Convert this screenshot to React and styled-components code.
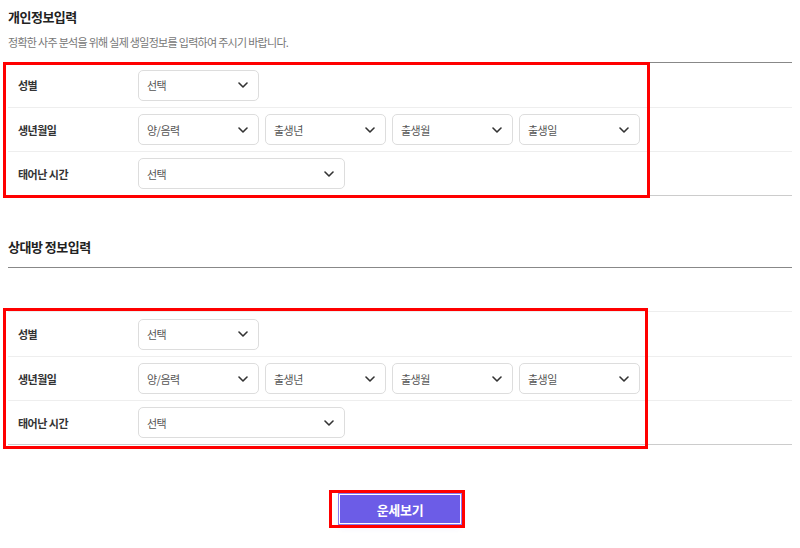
import React from "react";
import styled, { createGlobalStyle } from "styled-components";

const Global = createGlobalStyle`
  html, body { margin: 0; padding: 0; background: #fff; }
  body { font-family: "Noto Sans CJK KR", "Noto Sans", sans-serif; color: #333; }
  * { box-sizing: border-box; }
`;

const Page = styled.div`
  width: 800px;
  height: 548px;
  padding: 6px 8px 0;
  overflow: hidden;
`;

const Title = styled.h2`
  margin: 0;
  font-size: 13px;
  line-height: 22px;
  font-weight: 700;
  color: #222;
  letter-spacing: -0.5px;
`;

const SubTitle = styled.p`
  margin: 6px 0 12px;
  font-size: 11px;
  line-height: 16px;
  color: #777;
  letter-spacing: -0.7px;
`;

const HeadingBar = styled.div`
  margin-top: 40px;
  padding-bottom: 9px;
  border-bottom: 1px solid #888;
  margin-bottom: 43px;
`;

const TableWrap = styled.div`
  position: relative;
  border-top: 1px solid ${(p) => p.$top};
  border-bottom: 1px solid #ccc;
`;

const Row = styled.div`
  display: flex;
  align-items: center;
  height: 44px;
  & + & { border-top: 1px solid #eee; }
`;

const Label = styled.div`
  width: 130px;
  padding-left: 10px;
  font-size: 11px;
  font-weight: 700;
  color: #333;
  letter-spacing: -0.5px;
`;

const Controls = styled.div`
  display: flex;
  gap: 6px;
`;

const Select = styled.div`
  width: ${(p) => p.$w}px;
  height: 31px;
  border: 1px solid #ddd;
  border-radius: 5px;
  display: flex;
  align-items: center;
  justify-content: space-between;
  padding: 0 10px 0 8px;
  font-size: 11px;
  color: #555;
  letter-spacing: -0.5px;
  background: #fff;
`;

const Highlight = styled.div`
  position: absolute;
  left: ${(p) => p.$l}px;
  top: ${(p) => p.$t}px;
  width: ${(p) => p.$w}px;
  height: ${(p) => p.$h}px;
  border: 3px solid #ff0000;
  pointer-events: none;
`;

const ButtonArea = styled.div`
  display: flex;
  justify-content: center;
  margin-top: 49px;
`;

const ButtonWrap = styled.div`
  position: relative;
`;

const Button = styled.button`
  width: 122px;
  height: 30px;
  background: #6c5ce7;
  color: #fff;
  border: 1px solid #fff;
  outline: 1px solid #8a7cf0;
  font-family: inherit;
  font-size: 13px;
  font-weight: 700;
  letter-spacing: -0.3px;
  box-shadow: 0 3px 6px rgba(108, 92, 231, 0.12);
  cursor: pointer;
`;

const Chevron = () => (
  <svg width="10" height="6" viewBox="0 0 10 6">
    <path d="M1 1l4 4 4-4" fill="none" stroke="#333" strokeWidth="1.6" strokeLinecap="round" strokeLinejoin="round" />
  </svg>
);

const Sel = ({ w = 121, children }) => (
  <Select $w={w}>
    <span>{children}</span>
    <Chevron />
  </Select>
);

const Form = ({ top, hl }) => (
  <TableWrap $top={top}>
    <Row>
      <Label>성별</Label>
      <Controls>
        <Sel>선택</Sel>
      </Controls>
    </Row>
    <Row>
      <Label>생년월일</Label>
      <Controls>
        <Sel>양/음력</Sel>
        <Sel>출생년</Sel>
        <Sel>출생월</Sel>
        <Sel>출생일</Sel>
      </Controls>
    </Row>
    <Row>
      <Label>태어난 시간</Label>
      <Controls>
        <Sel w={207}>선택</Sel>
      </Controls>
    </Row>
    <Highlight $l={hl.l} $t={hl.t} $w={hl.w} $h={hl.h} />
  </TableWrap>
);

export default function App() {
  return (
    <>
      <Global />
      <Page>
        <Title>개인정보입력</Title>
        <SubTitle>정확한 사주 분석을 위해 실제 생일정보를 입력하여 주시기 바랍니다.</SubTitle>
        <Form top="#888" hl={{ l: -5, t: -1, w: 647, h: 136 }} />
        <HeadingBar>
          <Title>상대방 정보입력</Title>
        </HeadingBar>
        <Form top="#eee" hl={{ l: -5, t: -4, w: 645, h: 141 }} />
        <ButtonArea>
          <ButtonWrap>
            <Button>운세보기</Button>
            <Highlight $l={-10} $t={-4} $w={136} $h={38} />
          </ButtonWrap>
        </ButtonArea>
      </Page>
    </>
  );
}
